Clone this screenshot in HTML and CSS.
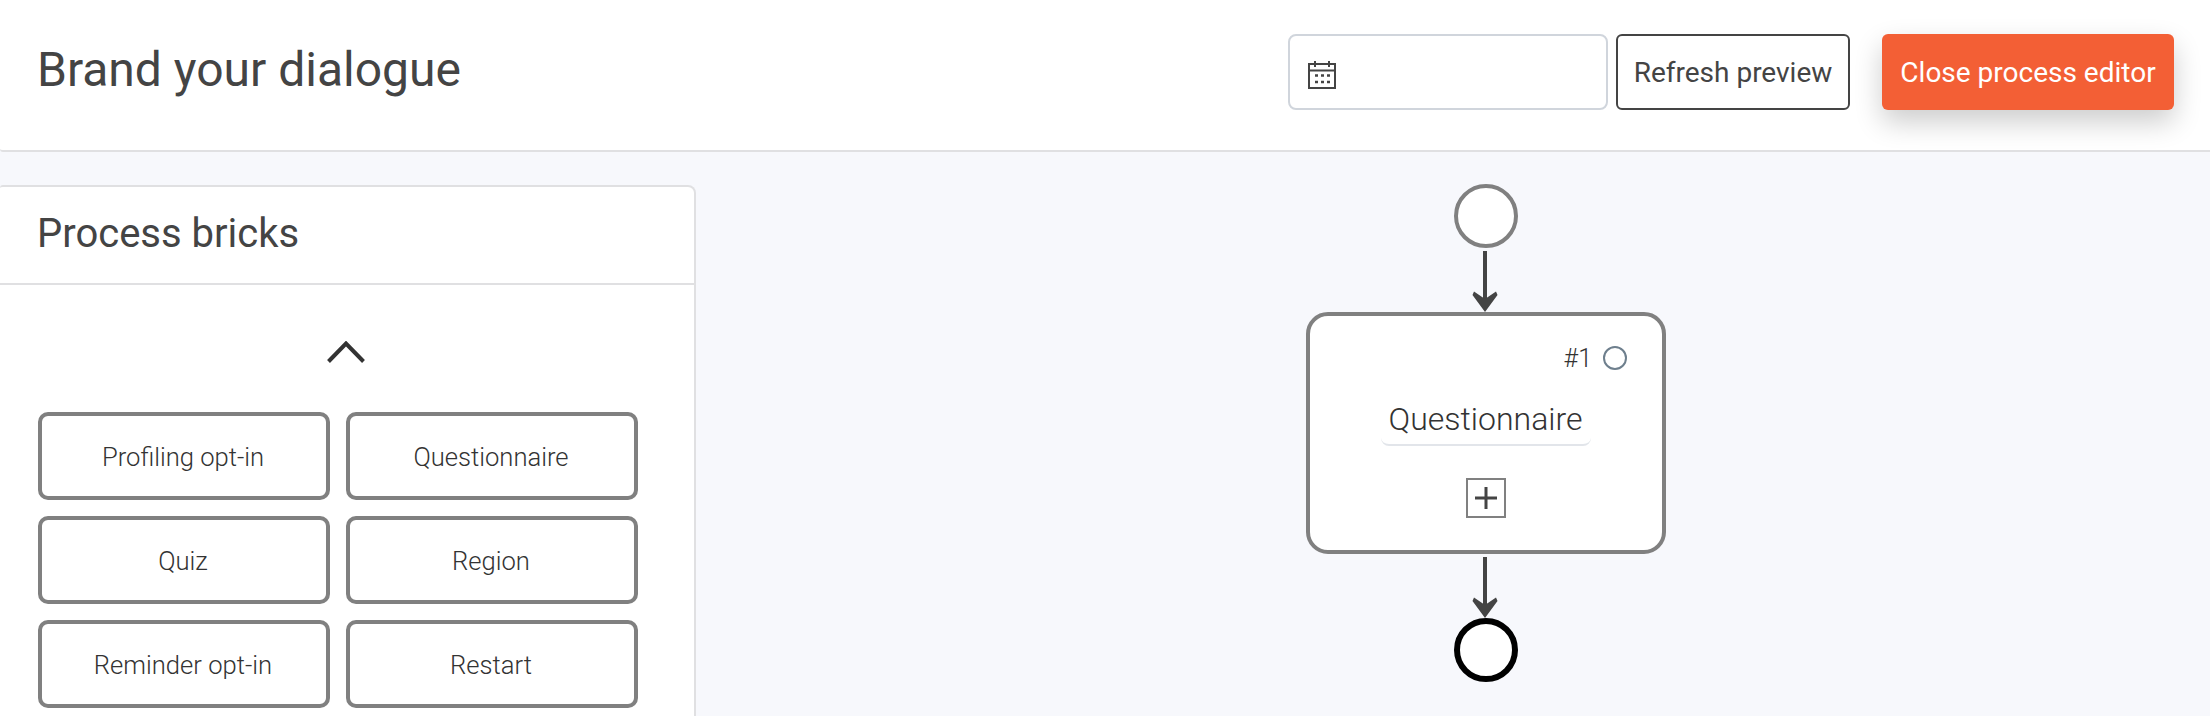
FILE: index.html
```html
<!DOCTYPE html>
<html lang="en">
<head>
<meta charset="utf-8">
<title>Brand your dialogue</title>
<link rel="stylesheet" href="styles.css">
</head>
<body>
<header class="topbar">
  <h1 class="page-title">Brand your dialogue</h1>
  <div class="actions">
    <div class="date-field">
      <svg class="cal-icon" viewBox="0 0 28 28" width="28" height="28" fill="none" stroke="#444" stroke-width="2">
        <rect x="1" y="3" width="26" height="24"/>
        <path d="M1 9.5h26M7 0v6M21 0v6"/>
        <path d="M7 14.5h3M13 14.5h3M19 14.5h3M7 21h3M13 21h3M19 21h3" stroke-width="2.4"/>
      </svg>
    </div>
    <button class="btn btn-outline">Refresh preview</button>
    <button class="btn btn-primary">Close process editor</button>
  </div>
</header>
<div class="workspace">
  <aside class="panel">
    <h2 class="panel-title">Process bricks</h2>
    <div class="panel-body">
      <div class="chevron-row">
        <svg viewBox="0 0 38 22" width="38" height="22" fill="none" stroke="#333" stroke-width="4"><path d="M1.5 20.5 19 2.5l17.5 18"/></svg>
      </div>
      <div class="brick-grid">
        <div class="brick">Profiling opt-in</div>
        <div class="brick">Questionnaire</div>
        <div class="brick">Quiz</div>
        <div class="brick">Region</div>
        <div class="brick">Reminder opt-in</div>
        <div class="brick">Restart</div>
      </div>
    </div>
  </aside>
  <main class="canvas">
    <div class="event event-start"></div>
    <svg class="connector" viewBox="0 0 28 64" width="28" height="64"><path d="M11 3h4v50h-4z" fill="#444"/><path d="M0.5 47 2 43.5 13 51 24 43.5 25.5 47 13 64z" fill="#444"/></svg>
    <section class="node">
      <div class="node-meta"><span>#1</span><span class="status-dot"></span></div>
      <div class="node-name">Questionnaire</div>
      <div class="add-box"><svg viewBox="0 0 22 22" width="22" height="22" stroke="#444" stroke-width="3"><path d="M0 11h22M11 0v22"/></svg></div>
    </section>
    <svg class="connector" viewBox="0 0 28 64" width="28" height="64"><path d="M11 3h4v50h-4z" fill="#444"/><path d="M0.5 47 2 43.5 13 51 24 43.5 25.5 47 13 64z" fill="#444"/></svg>
    <div class="event event-end"></div>
  </main>
</div>
</body>
</html>
```
FILE: styles.css
```css
* { box-sizing: border-box; }
html, body { margin: 0; height: 100%; }
body {
  width: 2210px;
  height: 716px;
  overflow: hidden;
  background: #f7f8fc;
  font-family: Roboto, "Liberation Sans", sans-serif;
  color: #444;
  display: flex;
  flex-direction: column;
}
.topbar {
  height: 152px;
  flex: none;
  background: #fff;
  border-bottom: 2px solid #e0e0e2;
  border-bottom-left-radius: 3px;
  padding: 34px 36px 0 37px;
  display: flex;
  justify-content: space-between;
  align-items: flex-start;
}
.page-title {
  margin: 3px 0 0;
  font-size: 48px;
  line-height: 66px;
  font-weight: 400;
  color: #444;
}
.actions { display: flex; align-items: stretch; height: 76px; }
.date-field {
  width: 320px;
  background: #fff;
  border: 2px solid #d0d5dc;
  border-radius: 8px;
  padding: 0 18px;
  display: flex;
  align-items: center;
}
.cal-icon { display: block; margin-top: 5px; }
.btn {
  font-family: inherit;
  font-size: 28px;
  border-radius: 6px;
  cursor: pointer;
  padding: 1px 0 0;
}
.btn-outline {
  width: 234px;
  margin-left: 8px;
  background: #fff;
  border: 2px solid #444;
  color: #444;
}
.btn-primary {
  width: 292px;
  margin-left: 32px;
  padding: 0;
  background: #f35f35;
  border: 0;
  color: #fff;
  font-weight: 400;
  box-shadow: 0 12px 28px rgba(0, 0, 0, 0.2);
}
.workspace { flex: 1; display: flex; min-height: 0; overflow: hidden; }
.panel {
  width: 696px;
  height: 620px;
  flex: none;
  margin-top: 33px;
  background: #fff;
  border: 2px solid #e0e0e2;
  border-left: 0;
  border-radius: 3px 8px 0 0;
}
.panel-title {
  margin: 0;
  height: 98px;
  padding-left: 37px;
  font-size: 40px;
  line-height: 94px;
  font-weight: 400;
  color: #444;
  border-bottom: 2px solid #e0e0e2;
}
.panel-body { padding: 0 56px 0 38px; }
.chevron-row { display: flex; justify-content: center; padding: 56px 0 0 16px; height: 127px; }
.chevron-row svg { display: block; }
.brick-grid {
  display: grid;
  grid-template-columns: 292px 292px;
  grid-auto-rows: 88px;
  gap: 16px;
}
.brick {
  background: #fff;
  border: 4px solid #808080;
  border-radius: 10px;
  padding: 2px 2px 0 0;
  display: flex;
  align-items: center;
  justify-content: center;
  font-size: 25.6px;
  font-weight: 300;
  color: #333;
}
.canvas {
  flex: 1;
  display: flex;
  flex-direction: column;
  align-items: center;
  max-width: 360px;
  padding-top: 32px;
  margin-left: 610px;
}
.event {
  width: 64px;
  height: 64px;
  flex: none;
  border-radius: 50%;
  background: #fff;
}
.event-start { border: 4px solid #808080; }
.event-end { border: 6px solid #000; }
.connector { display: block; flex: none; }
.node {
  width: 360px;
  height: 242px;
  flex: none;
  background: #fff;
  border: 4px solid #808080;
  border-radius: 22px;
}
.node-meta {
  display: flex;
  justify-content: flex-end;
  align-items: center;
  gap: 11px;
  height: 26px;
  margin-top: 29px;
  padding-right: 35px;
  font-size: 25px;
  font-weight: 300;
  color: #333;
}
.status-dot {
  width: 24px;
  height: 24px;
  border: 2px solid #6e7f8d;
  border-radius: 50%;
}
.node-name {
  width: 210px;
  height: 51px;
  margin: 24px auto 0;
  padding-right: 1px;
  text-align: center;
  font-size: 32px;
  line-height: 48px;
  font-weight: 300;
  color: #333;
  border-bottom: 2px solid #e2e5ea;
  border-radius: 8px;
}
.add-box {
  width: 40px;
  height: 40px;
  margin: 32px auto 0;
  border: 2px solid #808080;
  display: flex;
  align-items: center;
  justify-content: center;
}
.add-box svg { display: block; }
```
